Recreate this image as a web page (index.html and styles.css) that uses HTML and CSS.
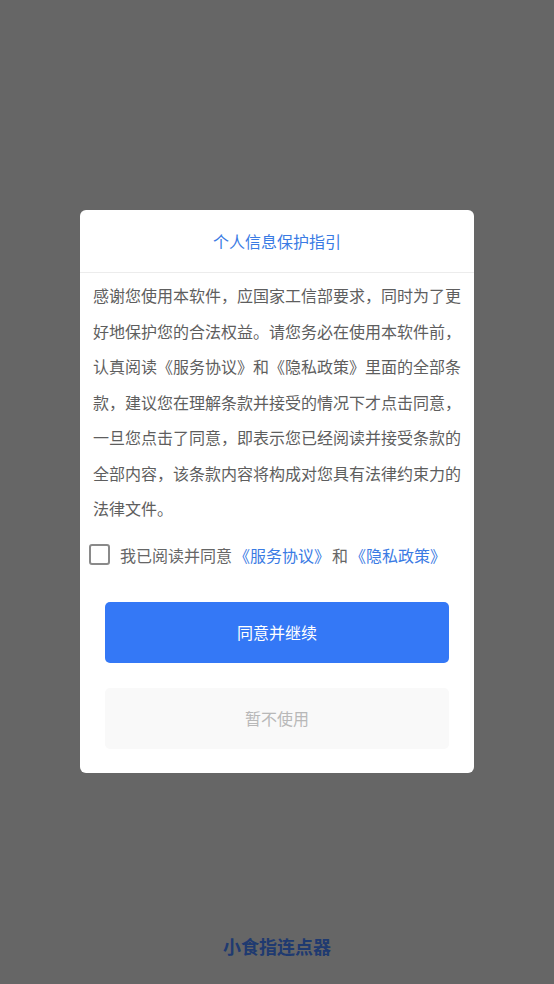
FILE: index.html
```html
<!DOCTYPE html>
<html lang="zh-CN">
<head>
    <meta charset="UTF-8">
    <meta name="viewport" content="width=device-width, initial-scale=1.0">
    <title>小食指连点器</title>
    <link rel="stylesheet" href="styles.css">
</head>
<body>

<!-- App page behind the dialog -->
<div class="app">
    <div class="app-name">小食指连点器</div>
</div>

<!-- Privacy dialog -->
<div class="mask">
    <div class="dialog">
        <div class="dialog-title">个人信息保护指引</div>
        <div class="dialog-body">
            <p class="notice">感谢您使用本软件，应国家工信部要求，同时为了更好地保护您的合法权益。请您务必在使用本软件前，认真阅读《服务协议》和《隐私政策》里面的全部条款，建议您在理解条款并接受的情况下才点击同意，一旦您点击了同意，即表示您已经阅读并接受条款的全部内容，该条款内容将构成对您具有法律约束力的法律文件。</p>
            <label class="agree-row">
                <span class="check-box"></span>
                <span>我已阅读并同意<a class="link">《服务协议》</a>和<a class="link">《隐私政策》</a></span>
            </label>
            <button class="btn btn-primary">同意并继续</button>
            <button class="btn btn-plain">暂不使用</button>
        </div>
    </div>
</div>

</body>
</html>
```

FILE: styles.css
```css
body {
    margin: 0;
    padding: 0;
    font-family: "Noto Sans CJK SC", "Noto Sans", sans-serif;
    background-color: #cccccc;
}
.app {
    height: 984px;
    display: flex;
    flex-direction: column;
    justify-content: flex-end;
    align-items: center;
}
.app-name {
    font-size: 18px;
    font-weight: bold;
    color: #3e74e0;
    line-height: 26px;
    margin-bottom: 25px;
}
.mask {
    position: fixed;
    top: 0;
    left: 0;
    right: 0;
    bottom: 0;
    background-color: rgba(0, 0, 0, 0.5);
    display: flex;
    align-items: center;
    justify-content: center;
}
.dialog {
    width: 394px;
    background-color: white;
    border-radius: 6px;
    margin-bottom: 1px;
}
.dialog-title {
    height: 62px;
    line-height: 62px;
    text-align: center;
    font-size: 16px;
    color: #3a7be4;
    border-bottom: 1px solid #ececec;
}
.dialog-body {
    padding: 5px 0 24px;
}
.notice {
    margin: 0;
    padding: 0 13px;
    font-size: 16px;
    line-height: 35.5px;
    color: #5e5e5e;
    text-align: justify;
}
.agree-row {
    display: flex;
    align-items: center;
    gap: 10px;
    margin: 17px 0 0 9px;
    font-size: 16px;
    line-height: 22px;
    color: #666666;
}
.check-box {
    width: 17px;
    height: 17px;
    border: 2px solid #8a8a8a;
    border-radius: 3px;
}
.link {
    color: #3a7be4;
    margin: 0 2px;
}
.btn {
    display: block;
    width: 344px;
    height: 61px;
    margin: 0 auto;
    border: none;
    border-radius: 5px;
    font-family: inherit;
    font-size: 16px;
}
.btn-primary {
    margin-top: 36px;
    background-color: #3478f6;
    color: white;
}
.btn-plain {
    margin-top: 25px;
    background-color: #f9f9f9;
    color: #b8b8b8;
}
```
